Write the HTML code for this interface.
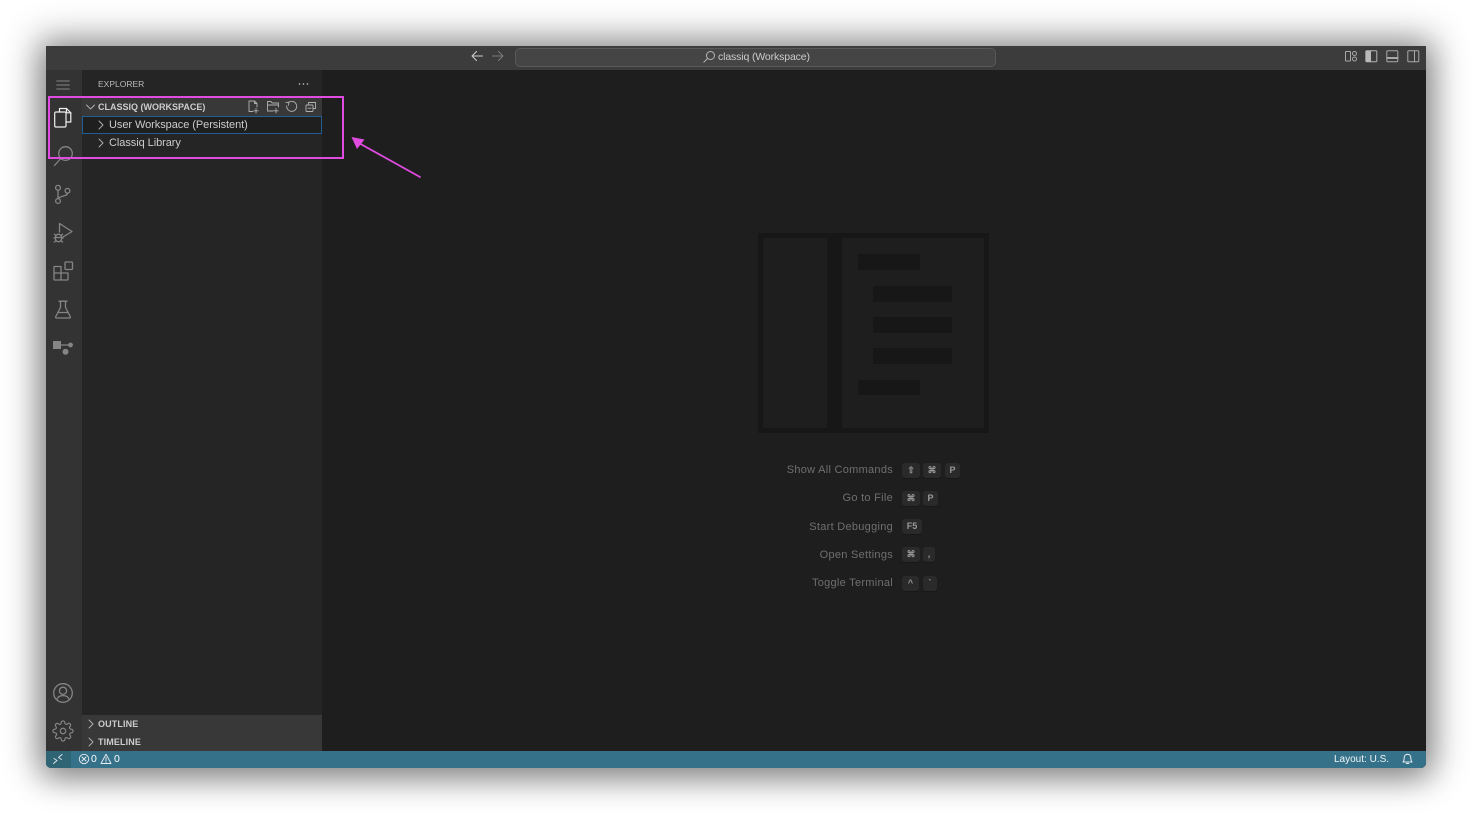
<!DOCTYPE html>
<html><head><meta charset="utf-8"><style>
html,body{margin:0;padding:0;width:1472px;height:814px;overflow:hidden;background:#fff}
body{position:relative;font-family:"Liberation Sans",sans-serif}
div,span,svg{position:absolute;box-sizing:border-box}
.t{white-space:nowrap;line-height:14px;filter:blur(.25px)}
svg{fill:none;stroke-linecap:round;stroke-linejoin:round;filter:blur(.2px)}
.act{stroke:#858585;stroke-width:1.3}
.side{stroke:#b0b0b0;stroke-width:.9}
.lbl{color:#6f6f6f;font-size:11px;letter-spacing:.28px;text-align:right;width:200px;left:693px}
.k{background:#2a2a2a;border-radius:3px;height:15px;top:0;color:#999;font-size:9px;line-height:15px;text-align:center;box-shadow:0 1px 0 #171717;font-weight:bold}
</style></head><body>
<div style="left:46px;top:46px;width:1380px;height:722px;border-radius:1px 1px 5px 5px;background:#1e1e1e;box-shadow:0 0 34px 8px rgba(0,0,0,.42),0 10px 30px rgba(0,0,0,.18);overflow:hidden">
<div style="left:0;top:0;width:1380px;height:24px;background:#3c3c3c"></div>
<div style="left:0;top:24px;width:36px;height:681px;background:#333"></div>
<div style="left:36px;top:24px;width:240px;height:681px;background:#252526"></div>
<div style="left:36px;top:52px;width:240px;height:18px;background:#383838"></div>
<div style="left:36px;top:70px;width:240px;height:18px;background:#1f1f20;border:1px solid #1f5f94"></div>
<div style="left:36px;top:669px;width:240px;height:36px;background:#383838"></div>
<div style="left:0;top:704.5px;width:1380px;height:17.5px;background:#36718a"></div>
<div style="left:0;top:704.5px;width:25px;height:17.5px;background:#2f6474"></div>
<div style="left:469px;top:2px;width:481px;height:19px;background:#454545;border:1px solid #595959;border-radius:5px"></div>
</div>

<svg style="left:470px;top:49px" width="14" height="14" viewBox="0 0 14 14"><path d="M2 7H12.5M2 7L6.5 2.5M2 7L6.5 11.5" stroke="#ccc" stroke-width="1"/></svg>
<svg style="left:491px;top:49px" width="14" height="14" viewBox="0 0 14 14"><path d="M12 7H1.5M12 7L7.5 2.5M12 7L7.5 11.5" stroke="#7b7b7b" stroke-width="1"/></svg>
<svg style="left:702px;top:50px" width="14" height="14" viewBox="0 0 14 14"><circle cx="8.5" cy="5.5" r="4" stroke="#b5b5b5" stroke-width="1"/><path d="M5.6 8.4L1.8 12.2" stroke="#b5b5b5" stroke-width="1"/></svg>
<div class="t" style="left:718px;top:50px;color:#ccc;font-size:10.5px;letter-spacing:-.13px">classiq (Workspace)</div>

<svg style="left:1344px;top:50px" width="14" height="13" viewBox="0 0 14 13" stroke="#a8a8a8" stroke-width="1"><rect x="1.5" y="1.5" width="5" height="9.5" rx=".5"/><circle cx="10.5" cy="3.5" r="2"/><circle cx="10.5" cy="9" r="2"/></svg>
<svg style="left:1365px;top:50px" width="13" height="13" viewBox="0 0 13 13" stroke="#b5b5b5" stroke-width="1"><rect x=".8" y=".8" width="11" height="11" rx="1"/><rect x="1" y="1" width="5" height="10.5" fill="#b9b9b9" stroke="none"/></svg>
<svg style="left:1385.5px;top:50px" width="13" height="13" viewBox="0 0 13 13" stroke="#a8a8a8" stroke-width="1"><rect x=".8" y=".8" width="11" height="11" rx="1"/><path d="M1 7.5H12M1 8.5H12"/></svg>
<svg style="left:1406.5px;top:50px" width="13" height="13" viewBox="0 0 13 13" stroke="#a8a8a8" stroke-width="1"><rect x=".8" y=".8" width="11" height="11" rx="1"/><path d="M7.5 1V12"/></svg>

<svg style="left:56px;top:80px" width="14" height="10" viewBox="0 0 14 10" stroke="#858585" stroke-width="1"><path d="M.7 1H13.3M.7 5H13.3M.7 9H13.3"/></svg>

<!-- activity -->
<svg style="left:52px;top:106px;filter:none" width="22" height="23" viewBox="0 0 22 23" stroke="#f0f0f0" stroke-width="1.2"><path d="M7.5 6V2.500H14.500L18.800 6.800V16H14"/><path d="M14.500 2.500V6.800H18.800"/><rect x="2.700" y="6" width="11.300" height="15" rx="1.200"/></svg>
<svg style="left:53px;top:145px" width="22" height="22" viewBox="0 0 22 22" class="act"><circle cx="12.5" cy="8.5" r="6.8"/><path d="M7.8 13.5L1.5 20.5"/></svg>
<svg style="left:53px;top:184px" width="20" height="21" viewBox="0 0 20 21" class="act"><circle cx="5" cy="3.8" r="2.4"/><circle cx="5" cy="17" r="2.4"/><circle cx="14.5" cy="6.8" r="2.4"/><path d="M5 6.2V14.6M14.5 9.2C14.5 12.5 7 11.5 5 14.6"/></svg>
<svg style="left:52px;top:222px" width="22" height="22" viewBox="0 0 22 22" class="act"><path d="M7.5 10V1.5L20 9.5L11 15"/><ellipse cx="6.5" cy="16" rx="3.2" ry="3.8"/><path d="M3.3 16H2M11 16H9.7M3.8 13.5L2.4 12.2M9.2 13.5L10.6 12.2M3.8 18.7L2.4 20M9.2 18.7L10.6 20M3.5 15.5H9.5"/></svg>
<svg style="left:52px;top:260px" width="22" height="22" viewBox="0 0 22 22" class="act"><path d="M2 6.5H9V20H2.8A.8 .8 0 0 1 2 19.2ZM9 13H2M9 13H16V19.2A.8 .8 0 0 1 15.2 20H9"/><rect x="13" y="2" width="7.5" height="7.5" rx="1"/></svg>
<svg style="left:54px;top:300px" width="18" height="19" viewBox="0 0 18 19" class="act"><path d="M5 1.2H13M6.5 1.2V7.5L1.8 16.5C1.3 17.4 1.8 18 2.7 18H15.3C16.2 18 16.7 17.4 16.2 16.5L11.5 7.5V1.2M4 12.5H14"/></svg>
<svg style="left:52px;top:340px" width="22" height="16" viewBox="0 0 22 16"><rect x="1" y="1" width="8" height="8" fill="#858585"/><path d="M9 5H17" stroke="#858585" stroke-width="1.3"/><circle cx="18.5" cy="5" r="2.4" fill="#858585"/><circle cx="13.5" cy="11.8" r="3" fill="#858585"/></svg>
<svg style="left:52px;top:682px" width="22" height="22" viewBox="0 0 22 22" class="act"><circle cx="11" cy="11" r="9.3"/><circle cx="11" cy="8.8" r="3.6"/><path d="M4.8 17.8C5.6 14.5 8 13.6 11 13.6S16.4 14.5 17.2 17.8"/></svg>
<svg style="left:52px;top:720px" width="22" height="22" viewBox="0 0 24 24" class="act" stroke-width="1.4"><circle cx="12" cy="12" r="3"/><path d="M19.4 15a1.65 1.65 0 0 0 .33 1.82l.06.06a2 2 0 1 1-2.83 2.83l-.06-.06a1.65 1.65 0 0 0-2.82 1.17V21a2 2 0 1 1-4 0v-.09a1.65 1.65 0 0 0-2.82-1.18l-.06.06a2 2 0 1 1-2.83-2.83l.06-.06A1.65 1.65 0 0 0 3.09 14H3a2 2 0 1 1 0-4h.09a1.65 1.65 0 0 0 1.24-2.82l-.06-.06a2 2 0 1 1 2.83-2.83l.06.06A1.65 1.65 0 0 0 10 3.09V3a2 2 0 1 1 4 0v.09a1.65 1.65 0 0 0 2.82 1.18l.06-.06a2 2 0 1 1 2.83 2.83l-.06.06A1.65 1.65 0 0 0 20.91 10H21a2 2 0 1 1 0 4h-.09a1.65 1.65 0 0 0-1.51 1z"/></svg>

<!-- sidebar -->
<div class="t" style="left:98px;top:77px;color:#bbb;font-size:8.5px">EXPLORER</div>
<svg style="left:298px;top:82px" width="12" height="4" viewBox="0 0 12 4"><circle cx="1.5" cy="2" r=".8" fill="#c5c5c5"/><circle cx="5.5" cy="2" r=".8" fill="#c5c5c5"/><circle cx="9.5" cy="2" r=".8" fill="#c5c5c5"/></svg>

<svg style="left:85px;top:102px" width="11" height="10" viewBox="0 0 11 10" class="side"><path d="M1.5 3L5.5 7L9.5 3"/></svg>
<div class="t" style="left:98px;top:100px;color:#ccc;font-size:9px;font-weight:bold">CLASSIQ (WORKSPACE)</div>
<svg style="left:247px;top:100px" width="13" height="14" viewBox="0 0 13 14" class="side"><path d="M6 11.5H2V1H7.5L10 3.5V7M7.5 1V3.5H10M9 8.5V13M6.8 10.8H11.2"/></svg>
<svg style="left:266px;top:100px" width="14" height="14" viewBox="0 0 14 14" class="side"><path d="M7 11H1.5V1.5H5L6 3H12.5V7M1.5 5H12.5M10 8.5V13M7.8 10.8H12.2"/></svg>
<svg style="left:285px;top:101px" width="13" height="13" viewBox="0 0 13 13" class="side"><path d="M3.5 1.5A5 5 0 1 1 1.7 5M3.8 1.2L3.6 4.3M3.8 1.2L1 1.6"/></svg>
<svg style="left:305px;top:101px" width="12" height="12" viewBox="0 0 12 12" class="side"><rect x="1" y="4" width="7" height="6.5" rx=".7"/><path d="M3.5 4V1.5H10.5V7.5H8M3 7.2H6"/></svg>

<svg style="left:96px;top:120px" width="10" height="10" viewBox="0 0 10 10" class="side"><path d="M3 1L7 5L3 9"/></svg>
<div class="t" style="left:109px;top:118px;color:#ccc;font-size:11px;letter-spacing:-.06px">User Workspace (Persistent)</div>
<svg style="left:96px;top:138px" width="10" height="10" viewBox="0 0 10 10" class="side"><path d="M3 1L7 5L3 9"/></svg>
<div class="t" style="left:109px;top:136px;color:#ccc;font-size:11px;letter-spacing:-.06px">Classiq Library</div>

<svg style="left:86px;top:718.5px" width="10" height="10" viewBox="0 0 10 10" class="side"><path d="M3 1L7 5L3 9"/></svg>
<div class="t" style="left:98px;top:716.500px;color:#ccc;font-size:9px;font-weight:bold;letter-spacing:.12px">OUTLINE</div>
<svg style="left:86px;top:736.5px" width="10" height="10" viewBox="0 0 10 10" class="side"><path d="M3 1L7 5L3 9"/></svg>
<div class="t" style="left:98px;top:734.500px;color:#ccc;font-size:9px;font-weight:bold;letter-spacing:.12px">TIMELINE</div>

<!-- status -->
<svg style="left:52px;top:753px" width="12" height="12" viewBox="0 0 12 12" stroke="#d7e3e8" stroke-width="1"><path d="M1.5 10.5L5 7.5L2 5.5M10 1.5L6.500 4.5L9.500 6.500"/></svg>
<svg style="left:78px;top:753px" width="12" height="12" viewBox="0 0 12 12" stroke="#e8eef0" stroke-width=".9"><circle cx="6" cy="6" r="4.7"/><path d="M4 4L8 8M8 4L4 8"/></svg>
<div class="t" style="left:91px;top:752px;color:#fff;font-size:10.5px">0</div>
<svg style="left:100px;top:753px" width="12" height="12" viewBox="0 0 12 12" stroke="#e8eef0" stroke-width=".9"><path d="M6 1.2L11 10.5H1ZM6 4.5V7.8M6 8.8V9.4"/></svg>
<div class="t" style="left:114px;top:752px;color:#fff;font-size:10.5px">0</div>
<div class="t" style="left:1334px;top:753px;color:#f1f5f6;font-size:10px">Layout: U.S.</div>
<svg style="left:1401px;top:752px" width="13" height="13" viewBox="0 0 13 13" stroke="#e8eef0" stroke-width="1"><path d="M2 10H11C9.800 8.800 9.800 7.500 9.800 5.500A3.300 3.300 0 0 0 3.200 5.500C3.200 7.500 3.200 8.800 2 10ZM5.300 11.500H7.700"/></svg>

<!-- watermark -->
<div style="left:758px;top:233px;width:231px;height:200px;border:5px solid #171717"></div>
<div style="left:827px;top:238px;width:15px;height:190px;background:#171717"></div>
<div style="left:858px;top:254px;width:62px;height:16px;background:#171717"></div>
<div style="left:873px;top:286px;width:79px;height:16px;background:#171717"></div>
<div style="left:873px;top:317px;width:79px;height:16px;background:#171717"></div>
<div style="left:873px;top:348px;width:79px;height:16px;background:#171717"></div>
<div style="left:858px;top:380px;width:62px;height:15px;background:#171717"></div>

<!-- shortcuts -->
<div class="t lbl" style="top:463px">Show All Commands</div>
<div class="t lbl" style="top:491px">Go to File</div>
<div class="t lbl" style="top:519.500px">Start Debugging</div>
<div class="t lbl" style="top:547.500px">Open Settings</div>
<div class="t lbl" style="top:576px">Toggle Terminal</div>

<div style="left:0;top:463px;width:0;height:0">
<span class="k" style="left:902px;width:18px">⇧</span><span class="k" style="left:923px;width:18px">⌘</span><span class="k" style="left:945px;width:15px">P</span></div>
<div style="left:0;top:491px;width:0;height:0">
<span class="k" style="left:902px;width:18px">⌘</span><span class="k" style="left:923px;width:15px">P</span></div>
<div style="left:0;top:519px;width:0;height:0">
<span class="k" style="left:902px;width:20px">F5</span></div>
<div style="left:0;top:547px;width:0;height:0">
<span class="k" style="left:902px;width:18px">⌘</span><span class="k" style="left:923px;width:12px">,</span></div>
<div style="left:0;top:575.500px;width:0;height:0">
<span class="k" style="left:902px;width:17px">^</span><span class="k" style="left:923px;width:14px">`</span></div>

<!-- annotation -->
<div style="left:48px;top:96px;width:296px;height:63px;border:2px solid #e04be0"></div>
<svg style="left:345px;top:130px" width="80" height="52" viewBox="0 0 80 52"><path d="M75 47L12 12" stroke="#e04be0" stroke-width="1.8"/><path d="M6.500 7L19.500 9.500L12 19Z" fill="#e04be0"/></svg>
</body></html>
